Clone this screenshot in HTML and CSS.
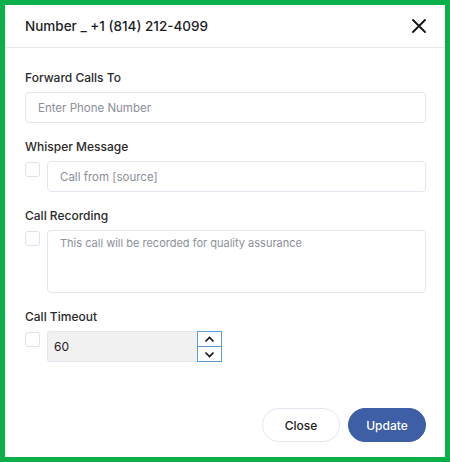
FILE: index.html
```html
<!DOCTYPE html>
<html lang="en">
  <head>
    <meta charset="UTF-8" />
    <title>Number Settings</title>
    <link rel="stylesheet" href="styles.css">
  </head>
  <body>
    <div class="modal">
      <div class="modal-header">
        <h2 class="modal-title">Number _ +1 (814) 212-4099</h2>
        <button class="close-x" type="button" aria-label="Close">
          <svg width="14" height="14" viewBox="0 0 14 14">
            <path d="M1 1 L13 13 M13 1 L1 13" stroke="#111" stroke-width="1.8" stroke-linecap="round" />
          </svg>
        </button>
      </div>

      <form class="modal-body">
        <div class="form-group">
          <label class="field-label">Forward Calls To</label>
          <input class="text-input" type="text" placeholder="Enter Phone Number" />
        </div>

        <div class="form-group">
          <label class="field-label">Whisper Message</label>
          <div class="check-row">
            <span class="check-box"></span>
            <input class="text-input indent" type="text" placeholder="Call from [source]" />
          </div>
        </div>

        <div class="form-group">
          <label class="field-label">Call Recording</label>
          <div class="check-row">
            <span class="check-box"></span>
            <textarea class="text-input area" placeholder="This call will be recorded for quality assurance"></textarea>
          </div>
        </div>

        <div class="form-group">
          <label class="field-label">Call Timeout</label>
          <div class="check-row">
            <span class="check-box"></span>
            <div class="number-wrap">
              <div class="number-value">60</div>
              <div class="spinner">
                <span class="spin-btn">
                  <svg width="11" height="7" viewBox="0 0 11 7"><path d="M1.5 5.5 L5.5 1.5 L9.5 5.5" fill="none" stroke="#111" stroke-width="1.6" /></svg>
                </span>
                <span class="spin-btn">
                  <svg width="11" height="7" viewBox="0 0 11 7"><path d="M1.5 1.5 L5.5 5.5 L9.5 1.5" fill="none" stroke="#111" stroke-width="1.6" /></svg>
                </span>
              </div>
            </div>
          </div>
        </div>

        <div class="modal-footer">
          <button class="btn btn-light" type="button">Close</button>
          <button class="btn btn-primary" type="submit">Update</button>
        </div>
      </form>
    </div>
  </body>
</html>
```

FILE: styles.css
```css
* {
  box-sizing: border-box;
}
body {
  margin: 0;
  font-family: Inter, "Noto Sans", sans-serif;
  color: #222;
  background: #fff;
}
.modal {
  width: 450px;
  height: 462px;
  border: 5px solid #0cb04b;
  display: flex;
  flex-direction: column;
  background: #fff;
}
.modal-header {
  height: 43px;
  padding: 0 19px 0 20px;
  display: flex;
  align-items: center;
  justify-content: space-between;
  border-bottom: 1px solid #e8eaf0;
}
.modal-title {
  margin: 0;
  font-size: 13.5px;
  font-weight: 500;
  color: #1d1d1f;
}
.close-x {
  border: 0;
  background: none;
  padding: 0;
  width: 14px;
  height: 14px;
  display: flex;
}
.modal-body {
  flex: 1;
  padding: 21px 19px 15px 20px;
  display: flex;
  flex-direction: column;
  margin: 0;
}
.form-group {
  margin-bottom: 15px;
}
.field-label {
  display: block;
  font-size: 12px;
  font-weight: 500;
  line-height: 18px;
  margin-bottom: 5px;
  color: #2a2a2a;
}
.text-input {
  display: block;
  width: 100%;
  height: 31px;
  padding: 0 12px;
  border: 1px solid #e3e6ee;
  border-radius: 4px;
  font-family: inherit;
  font-size: 11.5px;
  color: #222;
  background: #fff;
}
.text-input::placeholder {
  color: #8b8f99;
}
.check-row {
  display: flex;
  align-items: flex-start;
  gap: 7px;
}
.check-box {
  flex: none;
  width: 15px;
  height: 15px;
  margin-top: 1px;
  border: 1px solid #dfe2ea;
  border-radius: 3px;
}
.text-input.indent {
  flex: 1;
}
.text-input.area {
  flex: 1;
  height: 63px;
  padding: 5px 12px;
  font-size: 11px;
  resize: none;
}
.number-wrap {
  display: flex;
  height: 31px;
}
.number-value {
  width: 150px;
  padding-left: 6px;
  display: flex;
  align-items: center;
  font-size: 12px;
  background: #f1f1f1;
  border: 1px solid #e3e6ee;
  border-right: 0;
  border-radius: 3px 0 0 3px;
}
.spinner {
  width: 25px;
  display: flex;
  flex-direction: column;
}
.spin-btn {
  flex: 1;
  display: flex;
  align-items: center;
  justify-content: center;
  border: 1px solid #5b9bd5;
  background: #fff;
}
.spin-btn + .spin-btn {
  border-top: 0;
}
.modal-footer {
  margin-top: auto;
  display: flex;
  justify-content: flex-end;
  gap: 8px;
}
.btn {
  width: 78px;
  height: 34px;
  border-radius: 17px;
  font-family: inherit;
  font-size: 12px;
  font-weight: 500;
}
.btn-light {
  background: #fff;
  border: 1px solid #e3e6ee;
  color: #222;
}
.btn-primary {
  background: #3e5fa5;
  border: 1px solid #3e5fa5;
  color: #fff;
}
```
